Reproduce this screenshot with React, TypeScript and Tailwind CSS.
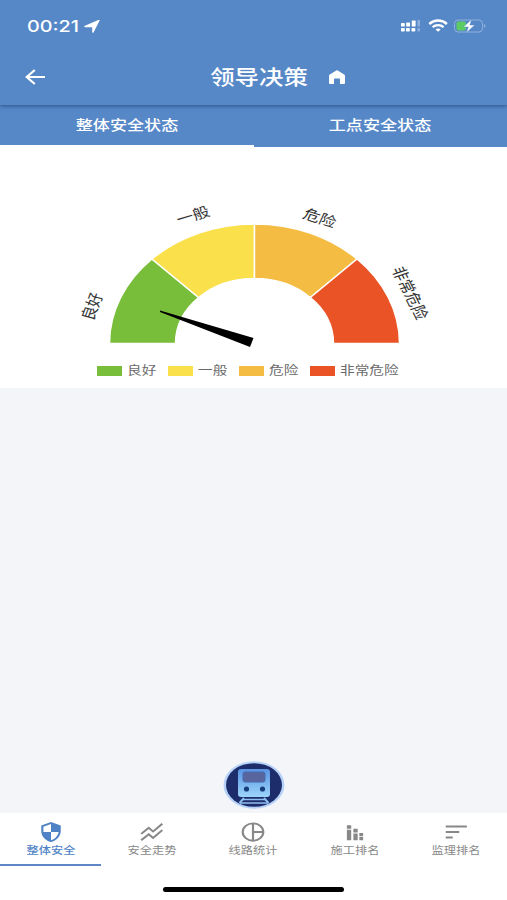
import { ReactNode } from "react"

const FONT = "font-['Liberation_Sans','Noto_Sans_CJK_SC',sans-serif]"

const levels = [
  { label: "良好", color: "#78be3a", x: -133, y: -37, rotate: -73, from: 180, to: 135 },
  { label: "一般", color: "#fae04b", x: -50.5, y: -128, rotate: -20, from: 135, to: 90 },
  { label: "危险", color: "#f4bc42", x: 53.5, y: -125.5, rotate: 21, from: 90, to: 45 },
  { label: "非常危险", color: "#e95325", x: 127.5, y: -50.5, rotate: 68, from: 45, to: 0 },
]

const point = (rx: number, ry: number, deg: number) => {
  const a = (deg * Math.PI) / 180
  return `${254.5 + rx * Math.cos(a)} ${196.5 - ry * Math.sin(a)}`
}

const segment = (from: number, to: number) =>
  `M${point(145, 119.5, from)}A145 119.5 0 0 1 ${point(145, 119.5, to)}L${point(79, 65, to)}A79 65 0 0 0 ${point(79, 65, from)}Z`

const StatusBar = () => (
  <div className="flex h-[50px] items-center pt-0.5 pr-5 pl-[27px] text-white">
    <span className="w-[53px] origin-left scale-x-[1.2] font-['Inter'] text-[16.5px] font-medium">00:21</span>
    <svg className="ml-1 h-[13px] w-4" viewBox="0 0 16 13" fill="currentColor">
      <path d="M15.6.6 9.7 12.3c-.5.9-1.500.7-1.500-.3V7.300H1.300C.1 7.300-.1 6.100.9 5.700L14.300.1c1-.4 1.700-.2 1.300.5Z" />
    </svg>
    <svg className="ml-auto h-[14px] w-[87px]" viewBox="0 0 87 14">
      <g fill="#fff">
        <rect x="1" y="9" width="3.8" height="3.5" rx=".7" />
        <rect x="6" y="9" width="3.8" height="3.5" rx=".7" />
        <rect x="11.5" y="9" width="3.8" height="3.5" rx=".7" />
        <rect x="1" y="4" width="3.8" height="3.6" rx=".7" />
        <rect x="6.2" y="3.5" width="3.8" height="4.1" rx=".7" />
        <rect x="11.8" y="1.5" width="3.8" height="6.1" rx=".7" />
      </g>
      <g fill="#8db0dc">
        <rect x="17.5" y="1" width="2.5" height="6.5" rx=".7" />
        <rect x="17.5" y="9" width="2.5" height="3.5" rx=".7" />
      </g>
      <g fill="none" stroke="#fff" strokeWidth="2.4">
        <path d="M29.3 5c5-4.600 12.600-4.600 17.600 0" />
        <path d="M32.6 8.200c3.200-2.800 7.800-2.800 11 0" />
      </g>
      <path d="m35.5 10.500 2.600 2.300 2.600-2.300c-1.500-1.300-3.700-1.300-5.200 0Z" fill="#fff" />
      <rect x="54.5" y="1" width="28" height="12" rx="3.5" fill="none" stroke="#8db0dc" />
      <path d="M84 5c2 .8 2 3.300 0 4Z" fill="#8db0dc" />
      <rect x="56.5" y="2.5" width="9.5" height="9" rx="2" fill="#5dcb64" />
      <path d="m71.5.6-8 7.300h4.800l-1.800 5.700 8.200-7.500h-4.800Z" fill="#fff" stroke="#5688c8" strokeWidth=".4" />
    </svg>
  </div>
)

const Header = () => (
  <header className="relative z-10 h-[105px] bg-[#5688c8] text-white shadow-[0_1px_4px_rgba(20,50,100,0.65)]">
    <StatusBar />
    <div className="grid h-[54px] grid-cols-[210px_98px_1fr] items-center">
      <svg className="ml-[25px] h-4 w-5" viewBox="0 0 20 16" fill="none" stroke="currentColor" strokeWidth="2.2">
        <path d="M9.8 1 1.700 8l8.100 7M2 8h18" />
      </svg>
      <h1 className="flex justify-center pt-0.5 text-xl font-medium whitespace-nowrap">
        <span className="scale-x-[1.22]">领导决策</span>
      </h1>
      <svg className="ml-[21px] h-3.5 w-4" viewBox="0 0 16 14" fill="currentColor">
        <path d="M7.300.4.8 4.600Q0 5.100 0 6v7q0 1 1 1h4V9.300q0-.8.800-.8h4.400q.8 0 .8.800V14h4q1 0 1-1V6q0-.9-.8-1.400L8.700.4Q8 0 7.300.4Z" />
      </svg>
    </div>
  </header>
)

const Tabs = () => (
  <div className="grid h-[42px] grid-cols-2 bg-[#5688c8] text-sm font-medium text-white">
    {["整体安全状态", "工点安全状态"].map((tab, i) => (
      <div key={tab} className={`flex items-center justify-center border-b-2 ${i === 0 ? "border-white" : "border-transparent"}`}>
        <span className="scale-x-[1.22]">{tab}</span>
      </div>
    ))}
  </div>
)

const Gauge = () => (
  <section className="h-[241px] bg-white">
    <svg className="block h-[212px] w-[507px]" viewBox="0 0 507 212">
      {levels.map((l) => (
        <path key={l.label} d={segment(l.from, l.to)} fill={l.color} stroke="#fff" strokeWidth="1.5" />
      ))}
      <path d="m160 163.5 93.500 27.500-3.500 9L160 165Z" fill="#000" />
      <g transform="translate(254.5 196.5) scale(1.22 1)" fill="#333" fontSize="14" textAnchor="middle">
        {levels.map((l) => (
          <text key={l.label} transform={`translate(${l.x} ${l.y}) rotate(${l.rotate})`} dy="5">
            {l.label}
          </text>
        ))}
      </g>
    </svg>
    <div className="flex h-6 items-center pl-[97px] text-xs text-[#6b6b6b]">
      {levels.map((l) => (
        <div key={l.label} className="flex w-[71px] shrink-0 items-center">
          <span className="h-2.5 w-[25px] shrink-0" style={{ backgroundColor: l.color }} />
          <span className="ml-[5px] origin-left scale-x-[1.22] whitespace-nowrap">{l.label}</span>
        </div>
      ))}
    </div>
  </section>
)

const TrainButton = () => (
  <svg className="absolute bottom-1 left-[223px] h-12 w-[62px]" viewBox="0 0 62 48">
    <defs>
      <linearGradient id="train" x1="0" y1="0" x2="0" y2="1">
        <stop stopColor="#5993e2" />
        <stop offset="1" stopColor="#9cd5fa" />
      </linearGradient>
    </defs>
    <ellipse cx="31" cy="24" rx="30.5" ry="23.8" fill="#b6d2f8" />
    <ellipse cx="31" cy="24" rx="28" ry="21.8" fill="#1d2d6c" />
    <path d="m21 37-4.500 5M41 37l4.500 5" stroke="#8ebff0" strokeWidth="2" />
    <rect x="15" y="8" width="32" height="28" rx="3" fill="url(#train)" />
    <rect x="20" y="11" width="22" height="10" rx="2" fill="#59659d" stroke="#456bb0" />
    <circle cx="23.5" cy="28" r="2.6" fill="#173d7c" />
    <circle cx="39.5" cy="28" r="2.6" fill="#173d7c" />
    <path d="M20 38.500h22M17 42h28" stroke="#8ebff0" strokeWidth="1.5" />
  </svg>
)

const navItems: { label: string; icon: ReactNode }[] = [
  {
    label: "整体安全",
    icon: <path fillRule="evenodd" d="M12 1 3 5v6c0 5.550 3.840 10.740 9 12 5.160-1.260 9-6.450 9-12V5l-9-4Zm0 10.990h7c-.53 4.120-3.280 7.790-7 8.940V12H5V6.300l7-3.110v8.800Z" />,
  },
  {
    label: "安全走势",
    icon: <path d="m2 14 7-6.500 4 4 8.500-8.500M2 21l7-6.500 4 4 8.500-8.500" fill="none" stroke="currentColor" strokeWidth="2" />,
  },
  {
    label: "线路统计",
    icon: <path d="M12 2.500a9.500 9.500 0 1 0 0 19 9.500 9.500 0 0 0 0-19ZM12 2.500v19M12 12h9.500" fill="none" stroke="currentColor" strokeWidth="2" />,
  },
  {
    label: "施工排名",
    icon: <path d="M4.500 9.500h4V21h-4zM4.500 4.500h4v4h-4zM10.500 13.500h4V21h-4zM10.500 8.500h4v4h-4zM16 17.500h3.500V21H16zM16 13h3.500v3.500H16z" />,
  },
  {
    label: "监理排名",
    icon: <path d="M2.500 5h19.500v2.200H2.500zM2.500 11H15v2.200H2.500zM2.500 17H9v2.200H2.500z" />,
  },
]

const BottomNav = () => (
  <nav className="h-[87px] bg-white">
    <div className="grid h-[53px] grid-cols-5">
      {navItems.map((item, i) => (
        <div
          key={item.label}
          className={`flex flex-col items-center border-b-2 pt-2 ${i === 0 ? "border-[#5f87c6] font-medium text-[#4f83c5]" : "border-transparent text-[#888]"}`}
        >
          <svg className="h-[22px] w-[26px]" viewBox="0 0 24 24" preserveAspectRatio="none" fill="currentColor">
            {item.icon}
          </svg>
          <span className="scale-x-[1.22] text-[10px] leading-4 whitespace-nowrap">{item.label}</span>
        </div>
      ))}
    </div>
    <div className="mx-auto mt-[21px] h-[5px] w-[181px] rounded-full bg-black" />
  </nav>
)

export default function App() {
  return (
    <div className={`flex h-[900px] w-[507px] flex-col overflow-hidden bg-[#f4f5f9] ${FONT}`}>
      <Header />
      <Tabs />
      <Gauge />
      <main className="relative flex-1">
        <TrainButton />
      </main>
      <BottomNav />
    </div>
  )
}
